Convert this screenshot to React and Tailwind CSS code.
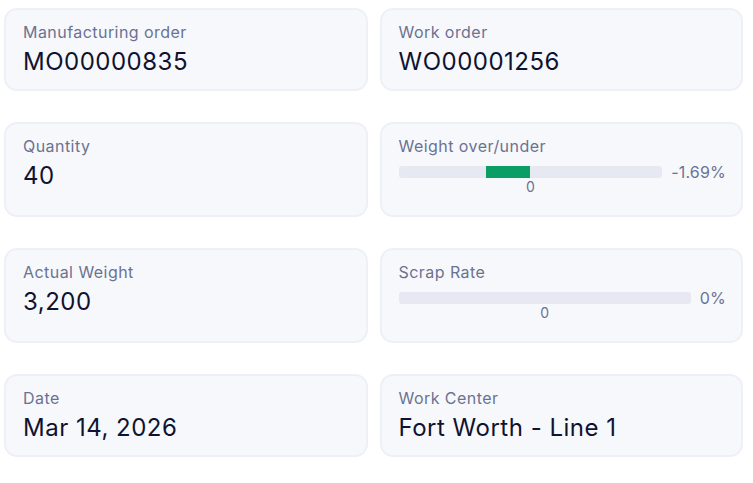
import React from "react";

function Card({ label, children }) {
  return (
    <div className="flex-1 min-w-0 bg-[#f7f8fc] border-2 border-[#eef0f7] rounded-[13px] pl-[17px] pr-[15px] pt-[11px] pb-[12px]">
      <div className="text-[16px] leading-[22px] tracking-[0.45px] text-[#6b7291]">
        {label}
      </div>
      {children}
    </div>
  );
}

function Value({ children }) {
  return (
    <div className="mt-[4px] text-[24px] leading-[30px] tracking-[0.5px] text-[#0f1330]">
      {children}
    </div>
  );
}

function Bar({ percent, fill }) {
  return (
    <div className="mt-[9px] mb-[8px]">
      <div className="flex items-center gap-[9px]">
        <div className="relative flex-1 h-[12px] bg-[#e7e9f2] rounded-[3px]">
          {fill && (
            <div className="absolute top-0 h-full right-1/2 w-[17%] bg-[#0b9e64]" />
          )}
        </div>
        <div className="text-[16px] leading-[12px] tracking-[0.2px] text-[#6b7291]">
          {percent}
        </div>
      </div>
      <div className="flex gap-[9px]">
        <div className="flex-1 text-center text-[14px] leading-[16px] text-[#6b7291] mt-[1px]">
          0
        </div>
        <div className="invisible text-[16px] leading-[12px] tracking-[0.2px]">
          {percent}
        </div>
      </div>
    </div>
  );
}

export default function App() {
  return (
    <div
      className="w-[753px] h-[483px] bg-white pl-[4px] pr-[10px] pt-[8px] flex flex-col gap-[31px]"
      style={{ fontFamily: "Inter, 'Noto Sans', sans-serif" }}
    >
      <div className="flex gap-[12px]">
        <Card label="Manufacturing order">
          <Value>MO00000835</Value>
        </Card>
        <Card label="Work order">
          <Value>WO00001256</Value>
        </Card>
      </div>
      <div className="flex gap-[12px]">
        <Card label="Quantity">
          <Value>40</Value>
        </Card>
        <Card label="Weight over/under">
          <Bar percent="-1.69%" fill />
        </Card>
      </div>
      <div className="flex gap-[12px]">
        <Card label="Actual Weight">
          <Value>3,200</Value>
        </Card>
        <Card label="Scrap Rate">
          <Bar percent="0%" />
        </Card>
      </div>
      <div className="flex gap-[12px]">
        <Card label="Date">
          <Value>Mar 14, 2026</Value>
        </Card>
        <Card label="Work Center">
          <Value>Fort Worth - Line 1</Value>
        </Card>
      </div>
    </div>
  );
}
